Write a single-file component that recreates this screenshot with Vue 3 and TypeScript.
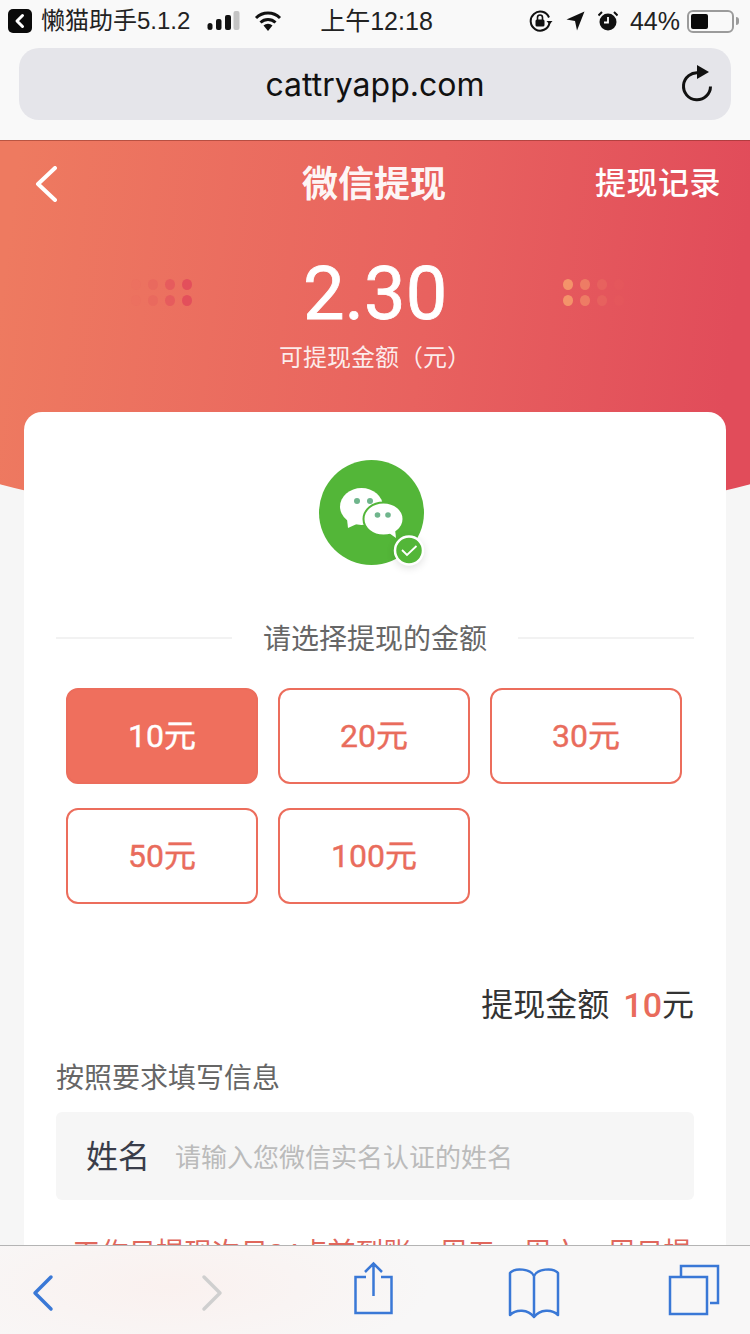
<template>
  <div class="phone">
    <!-- 系统状态栏 -->
    <div class="status-bar">
      <div class="status-left">
        <span class="app-back">
          <svg width="24" height="24" viewBox="0 0 24 24"><path d="M14.5 6.5 9 12l5.5 5.500" fill="none" stroke="#fff" stroke-width="3" stroke-linecap="round" stroke-linejoin="round" /></svg>
        </span>
        <span class="app-name">懒猫助手5.1.2</span>
        <svg class="signal" width="34" height="20" viewBox="0 0 34 20">
          <rect x="0.500" y="12" width="5" height="7" rx="2.500" fill="#111" />
          <rect x="9" y="8" width="5.500" height="11" rx="2" fill="#111" />
          <rect x="18" y="4" width="6" height="15" rx="2" fill="#111" />
          <rect x="26.500" y="0" width="6" height="19" rx="2" fill="#c4c4c4" />
        </svg>
        <svg class="wifi" width="28" height="20" viewBox="0 0 28 20">
          <path d="M2 7a17 17 0 0 1 24 0M6.500 11.500a11 11 0 0 1 15 0" fill="none" stroke="#111" stroke-width="3" />
          <path d="M9.500 14.500a6.500 6.500 0 0 1 9 0L14 20z" fill="#111" />
        </svg>
      </div>
      <span class="clock">上午12:18</span>
      <div class="status-right">
        <svg width="24" height="22" viewBox="0 0 24 22">
          <path d="M20.500 13A9.500 9.500 0 1 1 20 7.500" fill="none" stroke="#111" stroke-width="2" />
          <path d="M17.500 11h6l-3 3.500z" fill="#111" />
          <rect x="6.500" y="9.500" width="9" height="7" rx="1.500" fill="#111" />
          <path d="M8.500 10V7.500a2.500 2.500 0 0 1 5 0V10" fill="none" stroke="#111" stroke-width="1.600" />
        </svg>
        <svg class="loc" width="19" height="20" viewBox="0 0 19 20"><path d="M18.500 0.500 0.500 8.500l8.500 1.500 2 9.500z" fill="#111" /></svg>
        <svg class="alarm" width="20" height="20" viewBox="0 0 20 20">
          <circle cx="10" cy="11" r="8.500" fill="#111" />
          <path d="M10 6v5.500H6" fill="none" stroke="#fff" stroke-width="1.800" />
          <path d="M0.500 4.500 4 1M19.500 4.500 16 1" stroke="#111" stroke-width="2" />
        </svg>
        <span class="battery-text">44%</span>
        <span class="battery"><span class="battery-fill" :style="{ width: batteryWidth }" /></span>
        <span class="battery-nub" />
      </div>
    </div>

    <!-- 地址栏 -->
    <div class="url-wrap">
      <div class="url-bar">
        <span class="url-text">cattryapp.com</span>
        <svg class="reload" width="34" height="42" viewBox="0 0 34 42">
          <path d="M19 11A13.500 13.500 0 1 0 30.500 24.500" fill="none" stroke="#111" stroke-width="3" />
          <path d="M17 3l12 7-12 7z" fill="#111" />
        </svg>
      </div>
    </div>

    <div class="page">
      <section class="hero">
        <div class="nav">
          <svg class="nav-back" width="22" height="36" viewBox="0 0 22 36"><path d="M20 2 3 18l17 16" fill="none" stroke="#fff" stroke-width="4" stroke-linecap="round" stroke-linejoin="round" /></svg>
          <span class="nav-title">微信提现</span>
          <span class="nav-link">提现记录</span>
        </div>
        <div class="amount-row">
          <div class="dots dots-left">
            <i v-for="(o, i) in leftDots" :key="i" :style="{ opacity: o }" />
          </div>
          <span class="amount">2.30</span>
          <div class="dots dots-right">
            <i v-for="(o, i) in rightDots" :key="i" :style="{ opacity: o }" />
          </div>
        </div>
        <div class="amount-label">可提现金额（元）</div>
      </section>

      <section class="card">
        <svg class="wechat" width="120" height="120" viewBox="310 455 120 120">
          <defs>
            <filter id="soft" x="-50%" y="-50%" width="200%" height="200%"><feGaussianBlur stdDeviation="4" /></filter>
          </defs>
          <circle cx="371.500" cy="512.500" r="52.500" fill="#53b638" />
          <ellipse cx="361.500" cy="506.500" rx="21.500" ry="18.500" fill="#fff" />
          <path d="M347 519l1 9 11-5z" fill="#fff" />
          <ellipse cx="383.500" cy="519" rx="20" ry="16.500" fill="#fff" stroke="#53b638" stroke-width="2" />
          <path d="M389 533l7 5-1-9z" fill="#fff" />
          <circle cx="357" cy="501" r="3" fill="#6fb58c" />
          <circle cx="370" cy="501" r="3" fill="#6fb58c" />
          <circle cx="377.500" cy="515" r="2.800" fill="#6fb58c" />
          <circle cx="388" cy="515" r="2.800" fill="#6fb58c" />
          <circle cx="409" cy="553" r="15" fill="#000" opacity="0.12" filter="url(#soft)" />
          <circle cx="409" cy="550.500" r="14" fill="#53b638" stroke="#fff" stroke-width="2.500" />
          <path d="M402 550l5 5 9.500-9" fill="none" stroke="#fff" stroke-width="1.800" />
        </svg>

        <div class="divider">
          <span class="line" />
          <span class="divider-text">请选择提现的金额</span>
          <span class="line" />
        </div>

        <div class="options">
          <button
            v-for="n in options"
            :key="n"
            class="option"
            :class="{ active: n === selected }"
            type="button"
            @click="selected = n"
          >{{ n }}元</button>
        </div>

        <div class="total">
          <span>提现金额</span>
          <span class="total-num">{{ selected }}</span><span>元</span>
        </div>

        <div class="form-title">按照要求填写信息</div>
        <label class="field">
          <span class="field-label">姓名</span>
          <input class="field-input" type="text" placeholder="请输入您微信实名认证的姓名" />
        </label>

        <p class="notice">+工作日提现次日24点前到账，周五、周六、周日提</p>
      </section>
    </div>

    <!-- Safari 底部工具栏 -->
    <div class="toolbar">
      <svg class="tb tb-back" width="26" height="38" viewBox="0 0 26 38"><path d="M21 3 5 19l16 16" fill="none" stroke="#3a78d6" stroke-width="3.500" stroke-linecap="round" stroke-linejoin="round" /></svg>
      <svg class="tb tb-forward" width="26" height="38" viewBox="0 0 26 38"><path d="M5 3l16 16L5 35" fill="none" stroke="#cfcfcf" stroke-width="3.500" stroke-linecap="round" stroke-linejoin="round" /></svg>
      <svg class="tb tb-share" width="44" height="56" viewBox="0 0 44 56">
        <path d="M14 16H3.500v36h36V16H29M21.500 35V3M13 11l8.500-8.500L30 11" fill="none" stroke="#3a78d6" stroke-width="2.500" />
      </svg>
      <svg class="tb tb-book" width="54" height="52" viewBox="0 0 54 52">
        <path d="M27 9C24 2 8 0 3 6v42c6-6 18-6 24 2 6-8 18-8 24-2V6c-5-6-21-4-24 3zM27 9v41" fill="none" stroke="#3a78d6" stroke-width="2.500" stroke-linejoin="round" />
      </svg>
      <svg class="tb tb-tabs" width="52" height="52" viewBox="0 0 52 52">
        <path d="M13 12V2h37v37h-8" fill="none" stroke="#3a78d6" stroke-width="2.500" />
        <rect x="2" y="13" width="37" height="37" fill="none" stroke="#3a78d6" stroke-width="2.500" />
      </svg>
    </div>
  </div>
</template>

<script setup lang="ts">
import { ref } from 'vue';

const options = [10, 20, 30, 50, 100];
const selected = ref(10);
const batteryWidth = '44%';

// 左右装饰圆点，朝外渐隐
const leftDots = [0.05, 0.2, 0.55, 0.9, 0.05, 0.2, 0.55, 0.9];
const rightDots = [0.9, 0.55, 0.18, 0.04, 0.9, 0.55, 0.18, 0.04];
</script>

<style>
html,
body {
  margin: 0;
  background: #f6f6f6;
}
</style>

<style scoped>
.phone {
  width: 750px;
  height: 1334px;
  display: flex;
  flex-direction: column;
  overflow: hidden;
  font-family: 'Liberation Sans', 'Noto Sans CJK SC', sans-serif;
  background: #f6f6f6;
}

/* 状态栏 */
.status-bar {
  height: 42px;
  flex: none;
  display: grid;
  grid-template-columns: 1fr auto 1fr;
  align-items: center;
  padding: 0 11px 0 8px;
  box-sizing: border-box;
  background: #f9f9f9;
  color: #111;
}
.status-left,
.status-right {
  display: flex;
  align-items: center;
}
.status-right { justify-content: flex-end; }
.app-back {
  width: 24px;
  height: 24px;
  border-radius: 5px;
  background: #0a0a0a;
  display: flex;
}
.app-name {
  margin-left: 9px;
  font-size: 24px;
  line-height: 30px;
  color: #222;
}
.signal { margin-left: 17px; }
.wifi { margin-left: 13px; }
.clock {
  font-size: 25px;
  line-height: 30px;
  margin-left: 6px;
  color: #222;
}
.loc { margin-left: 13px; }
.alarm { margin-left: 13px; }
.battery-text {
  margin-left: 12px;
  font-size: 25px;
  color: #222;
}
.battery {
  margin-left: 7px;
  width: 47px;
  height: 23px;
  border: 2px solid #9b9b9b;
  border-radius: 6px;
  box-sizing: border-box;
  padding: 2px;
  display: flex;
}
.battery-fill {
  background: #0a0a0a;
  border-radius: 2px;
}
.battery-nub {
  margin-left: 2px;
  width: 3px;
  height: 8px;
  border-radius: 0 3px 3px 0;
  background: #9b9b9b;
}

/* 地址栏 */
.url-wrap {
  height: 98px;
  flex: none;
  padding: 6px 19px 0;
  box-sizing: border-box;
  background: #f9f9f9;
}
.url-bar {
  height: 72px;
  border-radius: 20px;
  background: #e5e5ea;
  display: flex;
  align-items: center;
  justify-content: center;
  position: relative;
}
.url-text {
  font-family: Inter, 'Liberation Sans', sans-serif;
  font-size: 32px;
  color: #111;
}
.reload {
  position: absolute;
  right: 17px;
  top: 14px;
}

/* 页面主体 */
.page {
  flex: 1;
  min-height: 0;
  overflow: hidden;
  position: relative;
}
.hero {
  position: relative;
  height: 272px;
  color: #fff;
}
.hero::before {
  content: '';
  position: absolute;
  top: 0;
  left: -75px;
  width: 900px;
  height: 381px;
  border-radius: 0 0 450px 450px / 0 0 82px 82px;
  background: linear-gradient(97deg, #ee7a60 10%, #e8625f 55%, #e14c5a 88%);
  box-shadow: inset 0 1px 0 rgba(120, 40, 30, 0.45);
}
.nav,
.amount-row,
.amount-label { position: relative; }
.nav {
  height: 86px;
  display: flex;
  align-items: center;
  justify-content: center;
}
.nav-back {
  position: absolute;
  left: 35px;
  top: 26px;
}
.nav-title {
  font-size: 36px;
  font-weight: 700;
  margin: -4px 0 0 -2px;
  color: rgba(255, 255, 255, 0.96);
}
.nav-link {
  position: absolute;
  right: 29px;
  top: 18px;
  font-size: 31px;
  letter-spacing: 0.5px;
  font-weight: 500;
}
.amount-row {
  display: flex;
  align-items: center;
  padding-left: 131px;
  height: 76px;
  margin-top: 30px;
}
.amount {
  width: 144px;
  margin: 0 116px 0 111px;
  text-align: center;
  font-family: Roboto, 'Liberation Sans', sans-serif;
  font-weight: 400;
  font-size: 74px;
  line-height: 76px;
  -webkit-text-stroke: 0.8px #fff;
}
.dots {
  display: grid;
  grid-template-columns: repeat(4, 10px);
  gap: 5px 7px;
  margin-top: -4px;
}
.dots i {
  height: 11px;
  border-radius: 50%;
}
.dots-left i { background: #e24b5b; }
.dots-right i { background: #f59a6c; }
.amount-label {
  margin-top: 10px;
  text-align: center;
  font-size: 24px;
  line-height: 32px;
  color: rgba(255, 255, 255, 0.88);
}

/* 白色卡片 */
.card {
  position: relative;
  margin: 0 24px;
  padding: 43px 32px 0;
  background: #fff;
  border-radius: 18px 18px 0 0;
}
.wechat {
  display: block;
  margin-left: 254px;
}
.divider {
  display: flex;
  align-items: center;
  justify-content: space-between;
  margin-top: 42px;
  height: 40px;
}
.line {
  width: 176px;
  height: 2px;
  margin-top: 2px;
  background: #f2f2f2;
}
.divider-text {
  font-size: 28px;
  color: #666;
}
.options {
  display: grid;
  grid-template-columns: repeat(3, 192px);
  gap: 24px 20px;
  margin: 31px 0 0 10px;
}
.option {
  height: 96px;
  padding: 0 0 6px;
  border: 2px solid #ec6d5c;
  border-radius: 12px;
  background: #fff;
  color: #e96c5c;
  font: inherit;
  font-family: Roboto, 'Noto Sans CJK SC', sans-serif;
  font-size: 32px;
  font-weight: 400;
  -webkit-text-stroke: 0.4px currentColor;
}
.option.active {
  background: #ef6f5d;
  color: #fff;
}
.total {
  margin-top: 80px;
  display: flex;
  justify-content: flex-end;
  align-items: center;
  font-size: 32px;
  line-height: 42px;
  color: #333;
}
.total-num {
  margin-left: 14px;
  font-family: Roboto, 'Liberation Sans', sans-serif;
  font-size: 34px;
  font-weight: 500;
  color: #e96c5c;
}
.form-title {
  margin-top: 32px;
  font-size: 28px;
  line-height: 42px;
  color: #666;
}
.field {
  margin-top: 12px;
  height: 88px;
  display: flex;
  align-items: center;
  padding-left: 30px;
  background: #f6f6f6;
  border-radius: 6px;
}
.field-label {
  font-size: 32px;
  color: #3a3d4a;
  margin-top: -4px;
}
.field-input {
  flex: 1;
  min-width: 0;
  margin-left: 25px;
  padding: 4px 0 0;
  border: none;
  outline: none;
  background: transparent;
  font: inherit;
  font-size: 26px;
}
.field-input::placeholder { color: #bbb; opacity: 1; }
.notice {
  margin: 32px 0 0;
  font-size: 28px;
  line-height: 44px;
  white-space: nowrap;
  color: #e0675c;
}

/* 工具栏 */
.toolbar {
  height: 89px;
  flex: none;
  display: flex;
  align-items: flex-start;
  box-sizing: border-box;
  border-top: 1px solid #b4b4b4;
  background: radial-gradient(ellipse 260px 80px at 170px 40px, #faf1ef, rgba(250, 241, 239, 0) 100%), #f8f7f7;
}
.tb { flex: none; }
.tb-back { margin: 28px 0 0 30px; }
.tb-forward { margin: 28px 0 0 143px; }
.tb-share { margin: 15px 0 0 127px; }
.tb-book { margin: 21px 0 0 111px; }
.tb-tabs { margin: 18px 0 0 107px; }
</style>
